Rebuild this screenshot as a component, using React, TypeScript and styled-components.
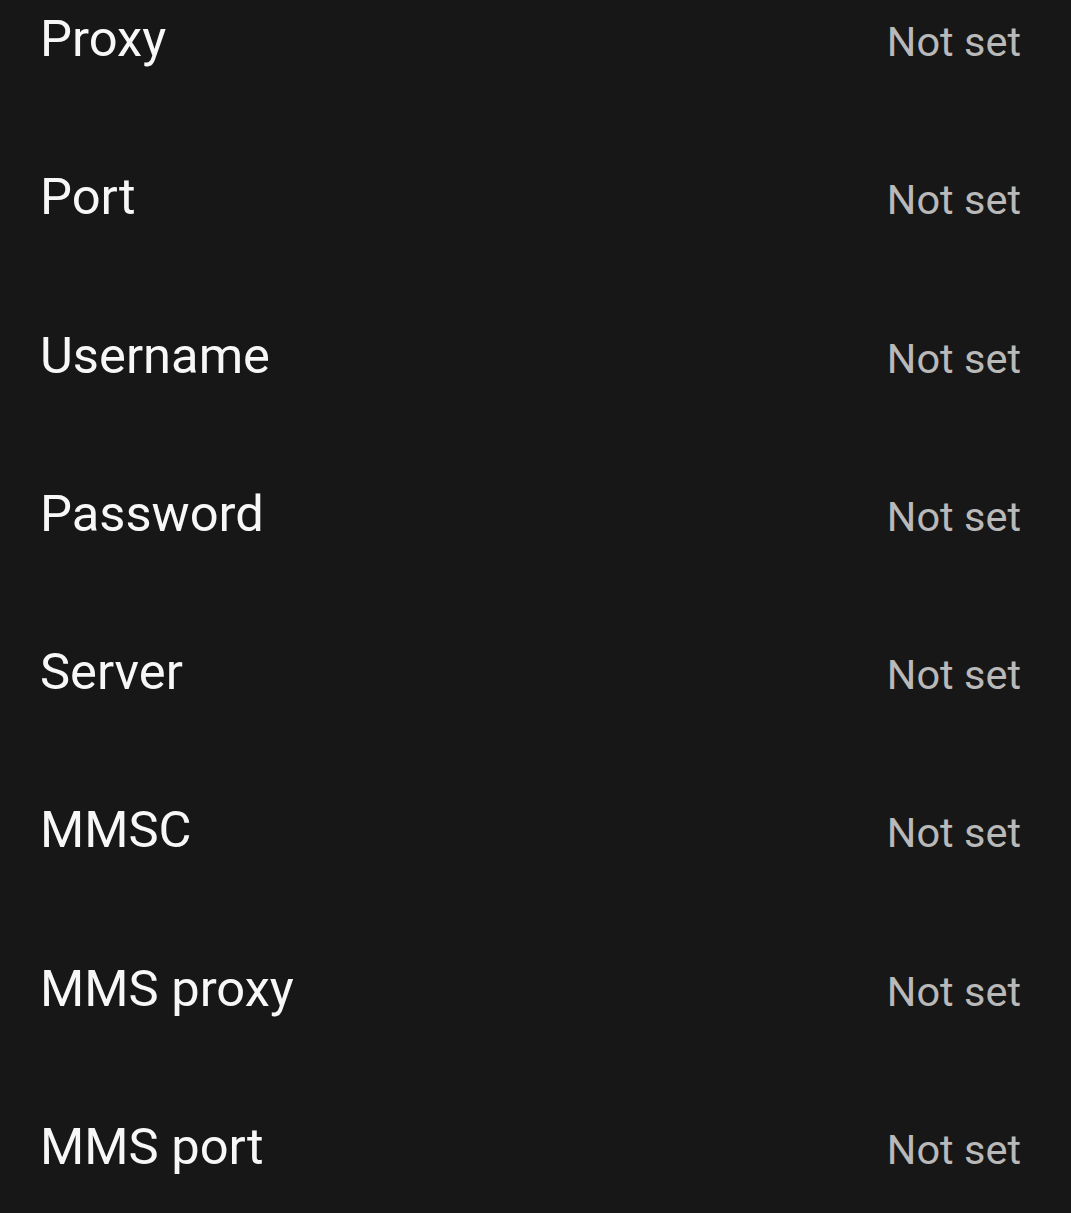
import styled, { createGlobalStyle } from 'styled-components'

const GlobalStyle = createGlobalStyle`
  html, body {
    margin: 0;
    padding: 0;
    background: #171717;
  }
  body {
    font-family: Roboto, "Noto Sans", Arial, sans-serif;
    overflow: hidden;
  }
`

const Screen = styled.div`
  width: 1071px;
  height: 1213px;
  background: #171717;
  overflow: hidden;
`

const List = styled.ul`
  list-style: none;
  margin: -40px 0 0;
  padding: 0;
`

const Row = styled.li`
  display: flex;
  justify-content: space-between;
  align-items: baseline;
  height: 158.3px;
  padding: 0 50px 0 40px;
`

const Label = styled.span`
  font-size: 50.7px;
  line-height: 158px;
  color: #f7f7f7;
`

const Value = styled.span`
  font-size: 41.5px;
  line-height: 158px;
  color: #b9b9b9;
`

const fields = ['Proxy', 'Port', 'Username', 'Password', 'Server', 'MMSC', 'MMS proxy', 'MMS port']

export default function App() {
  return (
    <Screen>
      <GlobalStyle />
      <List>
        {fields.map((name) => (
          <Row key={name}>
            <Label>{name}</Label>
            <Value>Not set</Value>
          </Row>
        ))}
      </List>
    </Screen>
  )
}
